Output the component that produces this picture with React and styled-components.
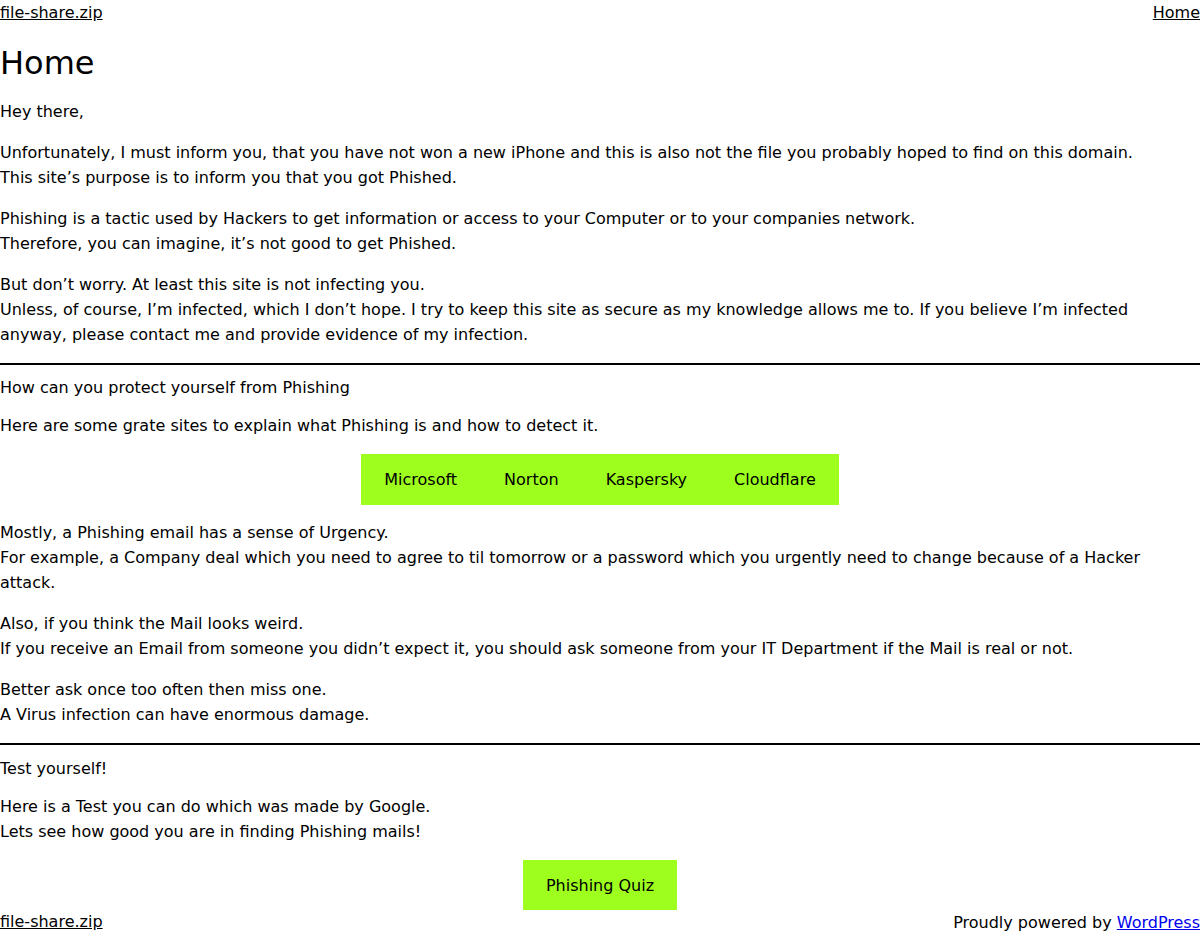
import styled, { createGlobalStyle } from "styled-components";

const GlobalStyle = createGlobalStyle`
  body {
    margin: 0;
    background: #ffffff;
    color: #000000;
    font-family: "DejaVu Sans", Verdana, sans-serif;
    font-size: 16px;
    line-height: 25px;
  }
  a {
    color: #000000;
  }
`;

const Page = styled.div`
  width: 1200px;
  display: flex;
  flex-direction: column;
`;

const TopBar = styled.header`
  display: flex;
  justify-content: space-between;
  height: 25px;
`;

const Title = styled.h1`
  font-size: 32px;
  font-weight: normal;
  line-height: 38px;
  margin: 19px 0 17px;
`;

const Content = styled.main`
  padding-right: 52px;
`;

const Para = styled.p`
  margin: 0;
  margin-bottom: ${(p) => p.$gap ?? 16}px;
`;

const Rule = styled.hr`
  border: none;
  height: 2px;
  background: #000;
  margin: 0 -52px 0 0;
  margin-top: ${(p) => p.$top}px;
  margin-bottom: ${(p) => p.$bottom}px;
`;

const ButtonRow = styled.div`
  display: flex;
  justify-content: center;
  margin: ${(p) => p.$margin};
  margin-right: -52px;
`;

const Group = styled.div`
  display: flex;
  background: #9eff1f;
`;

const GreenButton = styled.a`
  display: block;
  background: #9eff1f;
  color: #000;
  text-decoration: none;
  padding: ${(p) => (p.$tall ? "13px 23.5px" : "12.5px 22.5px")};
`;

const Footer = styled.footer`
  display: flex;
  justify-content: space-between;
  align-items: flex-end;
  height: 25px;
  margin-top: -1px;
`;

const Powered = styled.span`
  position: relative;
  top: 1px;
  a {
    color: #0000ee;
  }
`;

export default function App() {
  return (
    <Page>
      <GlobalStyle />
      <TopBar>
        <a href="#">file-share.zip</a>
        <a href="#">Home</a>
      </TopBar>
      <Title>Home</Title>
      <Content>
        <Para>Hey there,</Para>
        <Para>
          Unfortunately, I must inform you, that you have not won a new iPhone and this is also not the file you probably hoped to find on this domain.
          <br />
          This site’s purpose is to inform you that you got Phished.
        </Para>
        <Para>
          Phishing is a tactic used by Hackers to get information or access to your Computer or to your companies network.
          <br />
          Therefore, you can imagine, it’s not good to get Phished.
        </Para>
        <Para $gap={0}>
          But don’t worry. At least this site is not infecting you.
          <br />
          Unless, of course, I’m infected, which I don’t hope. I try to keep this site as secure as my knowledge allows me to. If you believe I’m infected anyway, please contact me and provide evidence of my infection.
        </Para>
        <Rule $top={16} $bottom={10} />
        <Para $gap={13}>How can you protect yourself from Phishing</Para>
        <Para $gap={0}>Here are some grate sites to explain what Phishing is and how to detect it.</Para>
        <ButtonRow $margin="16px 0 15px">
          <Group>
            <GreenButton href="#" $tall>Microsoft</GreenButton>
            <GreenButton href="#" $tall>Norton</GreenButton>
            <GreenButton href="#" $tall>Kaspersky</GreenButton>
            <GreenButton href="#" $tall>Cloudflare</GreenButton>
          </Group>
        </ButtonRow>
        <Para>
          Mostly, a Phishing email has a sense of Urgency.
          <br />
          For example, a Company deal which you need to agree to til tomorrow or a password which you urgently need to change because of a Hacker attack.
        </Para>
        <Para>
          Also, if you think the Mail looks weird.
          <br />
          If you receive an Email from someone you didn’t expect it, you should ask someone from your IT Department if the Mail is real or not.
        </Para>
        <Para $gap={0}>
          Better ask once too often then miss one.
          <br />
          A Virus infection can have enormous damage.
        </Para>
        <Rule $top={16} $bottom={10.5} />
        <Para $gap={13}>Test yourself!</Para>
        <Para $gap={0}>
          Here is a Test you can do which was made by Google.
          <br />
          Lets see how good you are in finding Phishing mails!
        </Para>
        <ButtonRow $margin="16.5px 0 0">
          <GreenButton href="#">Phishing Quiz</GreenButton>
        </ButtonRow>
      </Content>
      <Footer>
        <a href="#">file-share.zip</a>
        <Powered>
          Proudly powered by <a href="#">WordPress</a>
        </Powered>
      </Footer>
    </Page>
  );
}
